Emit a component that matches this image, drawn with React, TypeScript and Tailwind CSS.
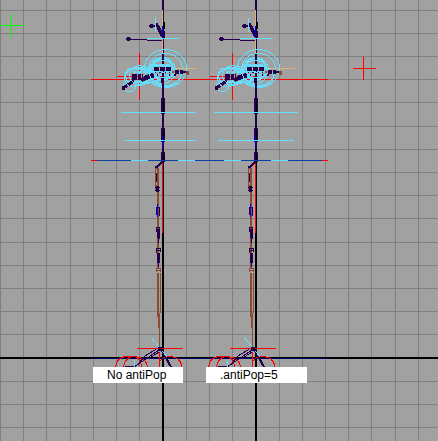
const columns = [0, 23, 46, 70, 93, 116, 139, 186, 209, 232, 279, 302, 325, 348, 371, 395, 418];
const rows = [10, 33, 56, 79, 102, 126, 149, 172, 195, 218, 242, 265, 288, 311, 334, 381, 404, 427];

const CYAN = "#63e0ff";
const RED = "#ff0000";
const BONE = "#25004a";
const RUST = "#8e4a30";
const SAND = "#e8ad70";
const NAVY = "#0c3fa8";

type BarProps = { x: number; y: number; w?: number; h?: number; c: string };

function Bar({ x, y, w = 1, h = 1, c }: BarProps) {
  return <rect x={x} y={y} width={w} height={h} fill={c} />;
}

function Rig({ offset, reach }: { offset: number; reach: number }) {
  return (
    <g transform={`translate(${offset} 0)`} fill="none" shapeRendering="crispEdges">
      {/* shoulder markers */}
      <Bar x={139} y={53} h={47} c={RED} />
      <Bar x={117} y={76} w={22} c={RED} />

      {/* spine */}
      <Bar x={162} y={0} w={2} h={161} c={BONE} />
      <Bar x={162} y={10} h={43} c={SAND} />
      <Bar x={163} y={22} w={2} h={7} c="#000000" />
      <Bar x={163} y={31} w={2} h={8} c={BONE} />
      <Bar x={161} y={98} w={4} h={16} c={BONE} />
      <Bar x={163} y={100} h={12} c="#000000" />
      <Bar x={161} y={128} w={4} h={14} c={BONE} />
      <Bar x={163} y={130} h={11} c="#000000" />
      <Bar x={161} y={152} w={4} h={10} c={BONE} />
      <Bar x={163} y={154} h={6} c="#000000" />
      <Bar x={162} y={26} h={12} c="#0000ff" />
      <Bar x={162} y={136} h={10} c="#0000d0" />

      {/* head */}
      <g stroke={BONE}>
        <path d="M130 39.5H147M147 38.5H162M147 40H162" />
        <path d="M157 26L162 37M158 25L162 34" strokeWidth="2" />
        <path d="M150 25.5H156" strokeWidth="2" />
      </g>
      <Bar x={127} y={37} w={3} h={4} c={BONE} />
      <Bar x={126} y={38} w={5} h={2} c={BONE} />
      <Bar x={150} y={24} w={3} h={4} c={BONE} />
      <Bar x={149} y={25} w={5} h={2} c={BONE} />
      <Bar x={155} y={23} w={3} h={4} c={BONE} />
      <Bar x={155} y={18} h={14} c={CYAN} />
      <Bar x={147} y={38} w={32} c={CYAN} />

      {/* control rings */}
      <Bar x={127} y={68} w={reach - 127} c={SAND} />
      <g stroke={CYAN}>
        <ellipse cx="165.5" cy="68.5" rx="21" ry="19" />
        <ellipse cx="165.5" cy="69.5" rx="17" ry="16" />
        <circle cx="162.5" cy="70.5" r="13" />
        <circle cx="162.5" cy="69.5" r="11" />
        <ellipse cx="162.5" cy="66.5" rx="10" ry="6" />
        <ellipse cx="162.5" cy="71.5" rx="13" ry="6" />
        <ellipse cx="162.5" cy="72.5" rx="10" ry="7" />
        <ellipse cx="165.5" cy="76.5" rx="15" ry="10" />
        <path d="M153 65H172M152 72H174M154 75H170" strokeDasharray="5 1" strokeWidth="2" />
        <circle cx="139.5" cy="75.5" r="10" />
        <ellipse cx="137.5" cy="76.5" rx="12" ry="8" />
        <ellipse cx="143.5" cy="75.5" rx="9" ry="7" />
        <ellipse cx="146.5" cy="74.5" rx="8" ry="5" />
        <ellipse cx="132.5" cy="77.5" rx="8" ry="9" />
        <ellipse cx="129.5" cy="86.5" rx="6" ry="5" />
        <path d="M133 72H150M134 82H148" strokeDasharray="4 1" strokeWidth="2" />
        <path d="M128 69L158 65M131 87L163 80M148 83L160 80" />
      </g>
      <g stroke={BONE}>
        <path d="M123 88L134 81" strokeWidth="3" strokeDasharray="5 1" />
        <path d="M132 77H143" strokeWidth="6" strokeDasharray="5 1 3 1" />
        <path d="M141 80L148 77" strokeWidth="4" />
        <path d="M145 78L154 75" strokeWidth="5" strokeDasharray="5 1" />
        <path d="M154 68.5H172" strokeWidth="4" strokeDasharray="5 1" />
        <path d="M155 72.5H170" strokeDasharray="1 3 2 4" />
        <path d="M157 74.5H176" strokeWidth="2" strokeDasharray="1 4 2 5" />
        <path d="M175 72L184 72" strokeWidth="4" strokeDasharray="4 1 3 1" />
      </g>
      <Bar x={122} y={86} w={3} h={4} c={BONE} />
      <Bar x={183} y={71} w={3} h={2} c={BONE} />
      <Bar x={186} y={71} w={3} h={4} c={RUST} />
      <Bar x={172} y={71} w={2} h={2} c={RUST} />
      <Bar x={160} y={76} w={2} c={RED} />
      <Bar x={162} y={56} w={2} h={3} c={BONE} />
      <Bar x={161} y={78} w={3} h={5} c={BONE} />
      <Bar x={162} y={83} w={2} h={15} c={BONE} />

      {/* torso guides */}
      <Bar x={121} y={112} w={(reach > 196 ? 205 : 196) - 121} c={CYAN} />
      <Bar x={125} y={140} w={(reach > 196 ? 201 : 196) - 125} c={CYAN} />

      {/* leg */}
      <Bar x={162} y={161} h={72} c={RED} />
      <path d="M163 161L157 167" stroke={BONE} strokeWidth="2" />
      <Bar x={155} y={168} w={4} h={22} c={RUST} />
      <Bar x={156} y={169} w={1} h={16} c="#a1a1a1" />
      <Bar x={156} y={173} h={9} c={BONE} />
      <Bar x={155} y={166} w={3} h={2} c={BONE} />
      <Bar x={157} y={190} w={2} h={78} c={RUST} />
      <Bar x={155} y={187} w={5} c={BONE} />
      <Bar x={156} y={186} w={3} h={6} c={BONE} />
      <Bar x={155} y={190} w={5} c={BONE} />
      <path d="M156.5 215V207.5H159.5V216" stroke={BONE} />
      <Bar x={157} y={204} h={13} c="#0000ff" />
      <path d="M156.5 232V227.5H159.5V239M158.5 229V243" stroke={BONE} />
      <Bar x={157} y={229} w={2} h={9} c={BONE} />
      <path d="M156.5 253V248.5H160.5V252M156 250.5H160" stroke={BONE} />
      <Bar x={157} y={253} w={3} h={10} c={BONE} />
      <Bar x={158} y={262} h={5} c={BONE} />
      <path d="M156.5 272V268.5H160.5V272M157 270.5H160" stroke={RUST} />
      <path d="M160.5 273V306L159.5 320V349" stroke={RUST} />
      <path d="M158 273V306L159 328" stroke={RUST} strokeWidth="2" />

      {/* foot */}
      <g stroke={RED}>
        <path d="M115.5 367C116 361 120 357.5 125 356.5H135C142 357 147 361 147.5 367" />
        <path d="M123.5 367C124 361 128 356.5 134 356.5C138 356.5 141 361 141.5 367" />
        <path d="M160 361C162 358 165 356.5 169 356.5C176 356.5 181 360 182 367" />
      </g>
      <g stroke={BONE}>
        <path d="M159 350L134 367M158 348L145 356L139 363M159 352L148 359" />
        <path d="M161 349L171 367" strokeWidth="2" />
        <path d="M125 366.5H135" />
      </g>
      <path d="M151 337L167 357" stroke={CYAN} />
      <Bar x={134} y={360} h={7} c={CYAN} />
      <Bar x={137} y={348} w={46} c={RED} />
      <Bar x={159} y={352} h={15} c={RED} />
      <Bar x={158} y={347} w={4} h={4} c={BONE} />
    </g>
  );
}

function Viewport() {
  return (
    <svg className="block h-[441px] w-full" role="img" aria-label="Front view of two character rigs" shapeRendering="crispEdges">
      {columns.map((x) => (
        <rect key={x} x={x} y="0" width="1" height="100%" fill="#808080" />
      ))}
      {rows.map((y) => (
        <rect key={y} x="0" y={y} width="100%" height="1" fill="#808080" />
      ))}
      <rect x="162" y="0" width="2" height="100%" fill="#000000" />
      <rect x="255" y="0" width="2" height="100%" fill="#000000" />
      <rect x="0" y="357" width="100%" height="2" fill="#000000" />
      <Bar x={91} y={358} w={237} c="#00006a" />
      <Bar x={91} y={79} w={237} c={RED} />

      <Bar x={0} y={25} w={24} c="#00ff00" />
      <Bar x={11} y={14} h={24} c="#00ff00" />
      <Bar x={353} y={68} w={23} c={RED} />
      <Bar x={363} y={57} h={23} c={RED} />

      <Rig offset={0} reach={196} />
      <Rig offset={93} reach={202} />

      <Bar x={91} y={160} w={237} c={RED} />
      <Bar x={97} y={160} w={225} c={NAVY} />
      {[131, 178, 224, 271].map((x) => (
        <Bar key={x} x={x} y={160} w={17} c={CYAN} />
      ))}
    </svg>
  );
}

export default function App() {
  return (
    <main className="relative overflow-hidden bg-[#a1a1a1] font-['Liberation_Sans',Arial,sans-serif] text-xs leading-4 text-black">
      <Viewport />
      <p className="absolute top-[367px] left-[93px] h-4 w-[90px] bg-white pl-3.5">No antiPop</p>
      <p className="absolute top-[367px] left-[206px] h-4 w-[101px] bg-white pl-3.5">.antiPop=5</p>
    </main>
  );
}
